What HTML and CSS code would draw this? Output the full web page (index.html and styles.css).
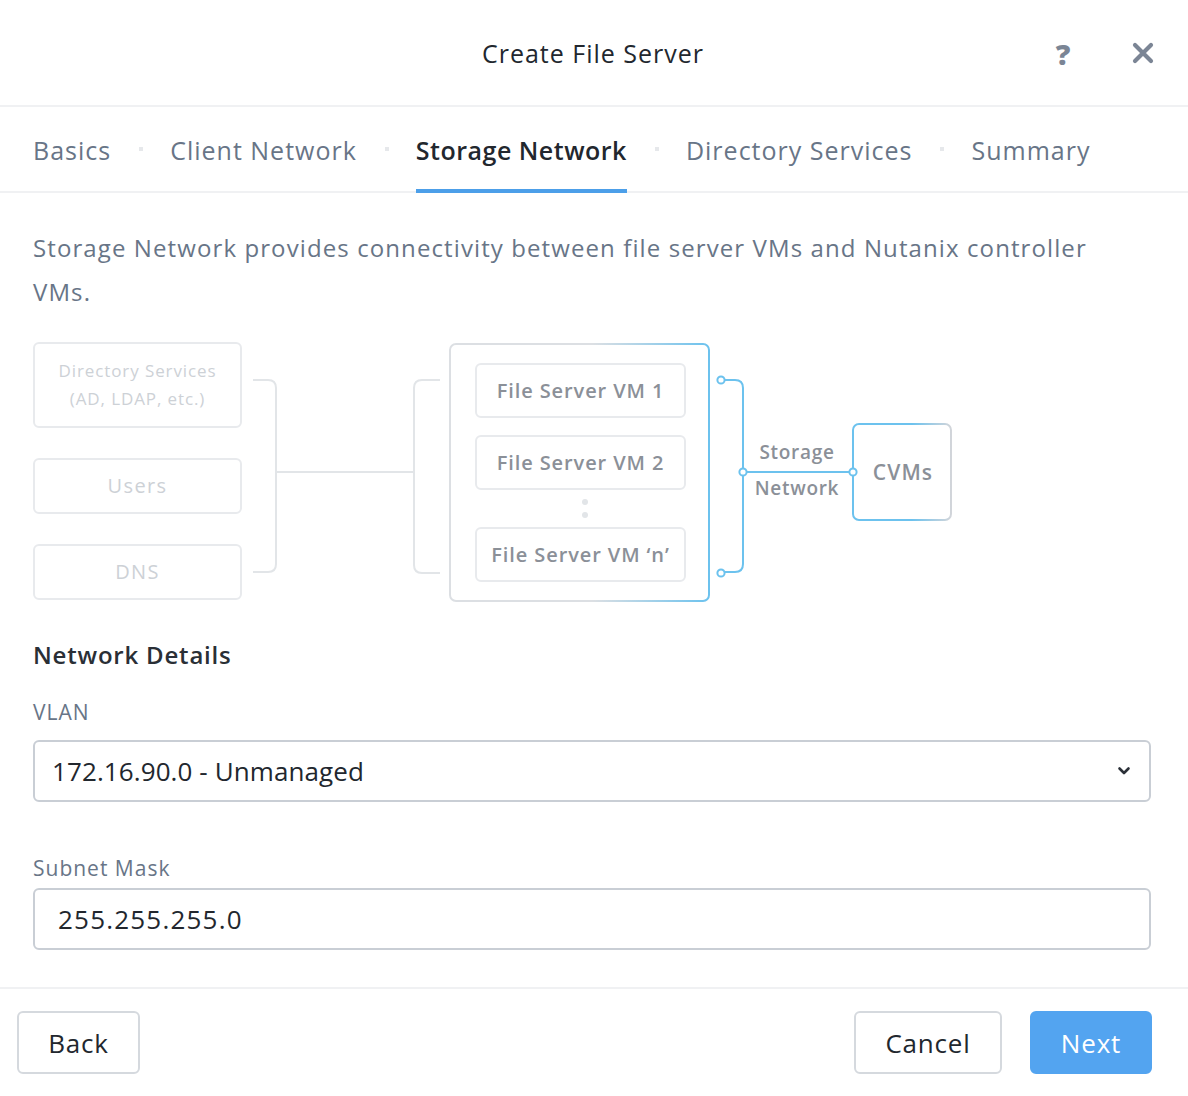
FILE: index.html
```html
<!DOCTYPE html>
<html>
<head>
<meta charset="utf-8">
<link rel="stylesheet" href="styles.css">
</head>
<body>
<div class="dialog">
  <header class="header">
    <div></div>
    <h1 class="title">Create File Server</h1>
    <div class="header-actions">
      <span class="help">?</span>
      <svg class="close" width="22" height="22" viewBox="0 0 22 22"><path d="M3 3 L19 19 M19 3 L3 19" stroke="#7b8595" stroke-width="4.2" stroke-linecap="round"/></svg>
    </div>
  </header>

  <nav class="tabs">
    <span class="tab">Basics</span><span class="sep"></span>
    <span class="tab">Client Network</span><span class="sep"></span>
    <span class="tab active">Storage Network</span><span class="sep"></span>
    <span class="tab">Directory Services</span><span class="sep"></span>
    <span class="tab">Summary</span>
  </nav>

  <main class="content">
    <p class="desc">Storage Network provides connectivity between file server VMs and Nutanix controller VMs.</p>

    <div class="diagram">
      <svg class="wires" width="1120" height="262" viewBox="0 0 1120 262">
        <defs>
          <linearGradient id="g1" x1="0" y1="0" x2="1" y2="0">
            <stop offset="0" stop-color="#dcdfe3"/>
            <stop offset="0.55" stop-color="#dcdfe3"/>
            <stop offset="1" stop-color="#6cc2ee"/>
          </linearGradient>
          <linearGradient id="g2" x1="0" y1="0" x2="1" y2="0">
            <stop offset="0" stop-color="#6cc2ee"/>
            <stop offset="0.6" stop-color="#6cc2ee"/>
            <stop offset="1" stop-color="#d2d5da"/>
          </linearGradient>
        </defs>
        <path d="M220 38 H235 Q243 38 243 46 V222 Q243 230 235 230 H220" fill="none" stroke="#e2e5e8" stroke-width="2"/>
        <path d="M243 130 H380" fill="none" stroke="#e2e5e8" stroke-width="2"/>
        <path d="M407 38 H389 Q381 38 381 46 V223 Q381 231 389 231 H407" fill="none" stroke="#e2e5e8" stroke-width="2"/>
        <rect x="417" y="2" width="259" height="257" rx="6" fill="none" stroke="url(#g1)" stroke-width="2"/>
        <circle cx="552" cy="160" r="3" fill="#e2e5e8"/>
        <circle cx="552" cy="173" r="3" fill="#e2e5e8"/>
        <path d="M691 38 H702 Q710 38 710 46 V222 Q710 230 702 230 H691" fill="none" stroke="#6cc2ee" stroke-width="2"/>
        <circle cx="688" cy="38" r="3.6" fill="#fff" stroke="#6cc2ee" stroke-width="2"/>
        <circle cx="688" cy="231" r="3.6" fill="#fff" stroke="#6cc2ee" stroke-width="2"/>
        <path d="M710 130 H820" fill="none" stroke="#6cc2ee" stroke-width="2"/>
        <circle cx="710" cy="130" r="3.6" fill="#fff" stroke="#6cc2ee" stroke-width="2"/>
        <rect x="820" y="82" width="98" height="96" rx="6" fill="none" stroke="url(#g2)" stroke-width="2"/>
        <circle cx="820" cy="130" r="3.6" fill="#fff" stroke="#6cc2ee" stroke-width="2"/>
      </svg>

      <div class="node faint n-dir">Directory Services<br>(AD, LDAP, etc.)</div>
      <div class="node faint n-users">Users</div>
      <div class="node faint n-dns">DNS</div>

      <div class="node vm n-vm1">File Server VM 1</div>
      <div class="node vm n-vm2">File Server VM 2</div>
      <div class="node vm n-vmn">File Server VM ‘n’</div>

      <div class="label-storage">Storage<br>Network</div>
      <div class="label-cvms">CVMs</div>
    </div>

    <h2 class="section">Network Details</h2>

    <label class="field-label">VLAN</label>
    <div class="select">
      <span>172.16.90.0 - Unmanaged</span>
      <svg width="14" height="10" viewBox="0 0 14 10"><path d="M2.5 2.5 L7 7 L11.5 2.5" fill="none" stroke="#2b3038" stroke-width="2.6" stroke-linecap="round" stroke-linejoin="round"/></svg>
    </div>

    <label class="field-label subnet">Subnet Mask</label>
    <div class="input">255.255.255.0</div>
  </main>

  <footer class="footer">
    <button class="btn">Back</button>
    <div class="right">
      <button class="btn cancel">Cancel</button>
      <button class="btn primary">Next</button>
    </div>
  </footer>
</div>
</body>
</html>
```

FILE: styles.css
```css
* { box-sizing: border-box; }
html, body { margin: 0; padding: 0; background: #fff; }
body {
  font-family: "Open Sans", "Lato", sans-serif;
  color: #22272e;
}
.dialog { width: 1188px; }

.header {
  height: 107px;
  display: grid;
  grid-template-columns: 1fr auto 1fr;
  align-items: center;
  border-bottom: 2px solid #f0f1f3;
}
.title {
  margin: 0;
  font-size: 25px;
  font-weight: 400;
  letter-spacing: 1px;
  color: #22272e;
  padding-right: 2px;
}
.header-actions {
  display: flex;
  justify-content: flex-end;
  align-items: center;
  padding-right: 34px;
}
.help {
  font-size: 29px;
  font-weight: 800;
  color: #7b8595;
  width: 24px;
  text-align: center;
  margin-right: 57px;
  margin-top: 2px;
}
.close { display: block; }

.tabs {
  height: 86px;
  display: flex;
  align-items: stretch;
  padding-left: 33px;
  border-bottom: 2px solid #f0f1f3;
}
.tab {
  display: flex;
  align-items: center;
  font-size: 25px;
  letter-spacing: 1px;
  color: #687587;
  padding-top: 4px;
  border-bottom: 4px solid transparent;
  margin-bottom: -2px;
}
.tab.active {
  color: #22272e;
  font-weight: 600;
  letter-spacing: 0.5px;
  border-bottom-color: #4c9fe9;
}
.sep {
  width: 4px;
  height: 4px;
  background: #e6e8eb;
  align-self: center;
  margin: 0 27px 0 28px;
}

.content { padding: 0 37px 0 33px; }
.desc {
  margin: 33px 0 0;
  max-width: 1085px;
  font-size: 24px;
  letter-spacing: 1.1px;
  line-height: 44px;
  color: #687587;
}

.diagram {
  position: relative;
  width: 1120px;
  height: 262px;
  margin-top: 28px;
}
.wires { position: absolute; left: 0; top: 0; }
.node {
  position: absolute;
  display: flex;
  align-items: center;
  justify-content: center;
  text-align: center;
  border: 2px solid #e8eaed;
  border-radius: 6px;
  background: #fff;
}
.faint {
  left: 0;
  width: 209px;
  color: #cdd1d6;
  font-size: 17px;
  letter-spacing: 0.9px;
  line-height: 28px;
}
.n-dir { top: 0; height: 86px; }
.n-users { top: 116px; height: 56px; font-size: 20px; letter-spacing: 1.4px; }
.n-dns { top: 202px; height: 56px; font-size: 20px; letter-spacing: 1.4px; }
.vm {
  left: 442px;
  width: 211px;
  height: 55px;
  font-size: 20px;
  letter-spacing: 0.9px;
  color: #8b9098;
  font-weight: 600;
}
.n-vm1 { top: 21px; }
.n-vm2 { top: 93px; }
.n-vmn { top: 185px; }
.label-storage {
  position: absolute;
  left: 708px;
  top: 92px;
  width: 112px;
  text-align: center;
  font-size: 19px;
  letter-spacing: 0.7px;
  line-height: 36px;
  color: #8b9098;
  font-weight: 600;
}
.label-cvms {
  position: absolute;
  left: 822px;
  top: 116px;
  width: 96px;
  text-align: center;
  font-size: 21px;
  letter-spacing: 1.1px;
  line-height: 28px;
  color: #8b9098;
  font-weight: 600;
}

.section {
  margin: 36px 0 0;
  font-size: 24px;
  letter-spacing: 0.8px;
  line-height: 30px;
  font-weight: 600;
  color: #2a2f36;
}
.field-label {
  display: block;
  margin-top: 28px;
  font-size: 21px;
  letter-spacing: 1px;
  line-height: 28px;
  color: #687587;
}
.field-label.subnet { margin-top: 52px; }
.select, .input {
  height: 62px;
  border: 2px solid #c9ced5;
  border-radius: 6px;
  display: flex;
  align-items: center;
  font-size: 26px;
  color: #22272e;
}
.select {
  margin-top: 14px;
  padding: 0 18px 0 17px;
  justify-content: space-between;
  letter-spacing: 0.1px;
}
.input {
  margin-top: 6px;
  padding: 0 23px;
  letter-spacing: 1.2px;
}

.footer {
  margin-top: 37px;
  border-top: 2px solid #f0f1f3;
  padding: 22px 36px 0 17px;
  display: flex;
  justify-content: space-between;
}
.right { display: flex; gap: 28px; }
.btn {
  height: 63px;
  font-family: inherit;
  font-size: 26px;
  letter-spacing: 0.8px;
  color: #22272e;
  background: #fff;
  border: 2px solid #d5d9de;
  border-radius: 6px;
  padding: 0;
  width: 123px;
}
.btn.cancel { width: 148px; }
.btn.primary {
  width: 122px;
  background: #53a4f0;
  border-color: #53a4f0;
  color: #fff;
}
```
